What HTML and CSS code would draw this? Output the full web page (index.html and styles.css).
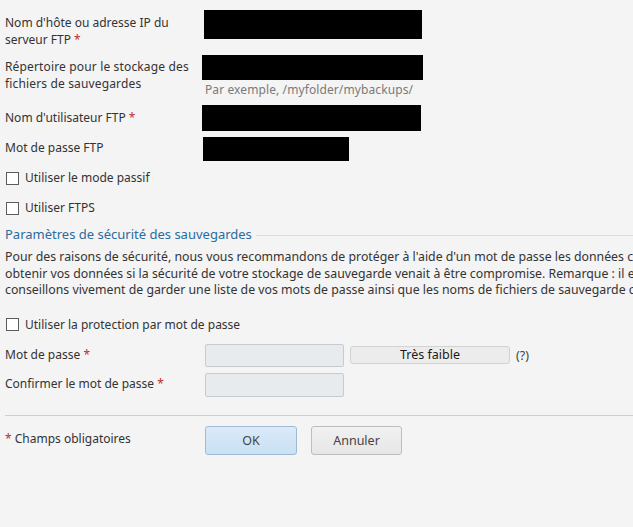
FILE: index.html
```html
<!DOCTYPE html>
<html lang="fr">
<head>
<meta charset="utf-8">
<title>FTP</title>
<link rel="stylesheet" href="styles.css">
</head>
<body>
<div class="page">
  <div class="row row-host">
    <div class="lbl">Nom d'hôte ou adresse IP du serveur FTP <span class="req">*</span></div>
    <div class="field"><div class="redact host"></div></div>
  </div>
  <div class="row row-dir">
    <div class="lbl">Répertoire pour le stockage des fichiers de sauvegardes</div>
    <div class="field">
      <div class="redact dir"></div>
      <div class="hint">Par exemple, /myfolder/mybackups/</div>
    </div>
  </div>
  <div class="row row-user">
    <div class="lbl">Nom d'utilisateur FTP <span class="req">*</span></div>
    <div class="field"><div class="redact user"></div></div>
  </div>
  <div class="row row-pass">
    <div class="lbl">Mot de passe FTP</div>
    <div class="field"><div class="redact pass"></div></div>
  </div>
  <label class="check cb-passive"><span class="box"></span>Utiliser le mode passif</label>
  <label class="check cb-ftps"><span class="box"></span>Utiliser FTPS</label>
  <div class="section-title"><span>Paramètres de sécurité des sauvegardes</span><span class="rule"></span></div>
  <p class="desc">Pour des raisons de sécurité, nous vous recommandons de protéger à l'aide d'un mot de passe les données contenues dans vos sauvegardes afin que des tiers ne puissent pas<br>obtenir vos données si la sécurité de votre stockage de sauvegarde venait à être compromise. Remarque : il est impossible de restaurer une sauvegarde sans son mot de passe. Nous vous<br>conseillons vivement de garder une liste de vos mots de passe ainsi que les noms de fichiers de sauvegarde correspondants.</p>
  <label class="check cb-protect"><span class="box"></span>Utiliser la protection par mot de passe</label>
  <div class="row row-pw">
    <div class="lbl">Mot de passe <span class="req">*</span></div>
    <div class="field inline">
      <div class="input pw1"></div>
      <div class="strength">Très faible</div>
      <span class="help">(?)</span>
    </div>
  </div>
  <div class="row row-pw2">
    <div class="lbl">Confirmer le mot de passe <span class="req">*</span></div>
    <div class="field"><div class="input pw2"></div></div>
  </div>
  <div class="separator"></div>
  <div class="footer">
    <div class="lbl"><span class="req">*</span> Champs obligatoires</div>
    <div class="buttons">
      <button class="btn btn-ok">OK</button>
      <button class="btn btn-cancel">Annuler</button>
    </div>
  </div>
</div>
</body>
</html>
```

FILE: styles.css
```css
html, body {
  margin: 0;
  padding: 0;
  overflow: hidden;
  background: #f4f4f4;
}
body {
  font-family: "Noto Sans", "DejaVu Sans", sans-serif;
  font-size: 12px;
  color: #333;
}
.page {
  width: 900px;
  padding-left: 5px;
  display: flex;
  flex-direction: column;
}
.row {
  display: flex;
  align-items: flex-start;
  flex: none;
}
.lbl {
  width: 197px;
  line-height: 17px;
  flex: none;
}
.req { color: #b83030; }
.field { display: flex; flex-direction: column; }
.field.inline { flex-direction: row; align-items: center; }
.redact { background: #000; }

.row-host { margin-top: 10px; height: 45px; }
.row-host .lbl { padding-top: 4px; }
.redact.host { width: 218px; height: 29px; margin-left: 2px; }

.row-dir { height: 50px; }
.row-dir .lbl { padding-top: 3px; letter-spacing: 0.15px; }
.redact.dir { width: 221px; height: 25px; }
.hint { color: #7a7a7a; line-height: 17px; margin-left: 3px; margin-top: 1px; letter-spacing: 0.1px; }

.row-user { height: 32px; }
.row-user .lbl { padding-top: 4px; }
.redact.user { width: 219px; height: 26px; }

.row-pass { height: 31px; }
.row-pass .lbl { padding-top: 2px; }
.redact.pass { width: 146px; height: 24px; margin-left: 1px; }

.check {
  display: flex;
  align-items: center;
  height: 20px;
  line-height: 20px;
  flex: none;
}
.box {
  width: 11px;
  height: 11px;
  border: 1px solid #5c5c5c;
  background: #fff;
  margin-left: 1px;
  margin-right: 6px;
  flex: none;
}
.cb-passive { margin-top: 0; }
.cb-ftps { margin-top: 10px; }

.section-title {
  display: flex;
  align-items: center;
  margin-top: 8px;
  height: 16px;
  color: #2b6c9c;
  font-size: 13px;
}
.section-title .rule {
  flex: 1;
  height: 1px;
  background: #dcdcdc;
  margin-left: 4px;
  margin-top: 2px;
}
.desc {
  margin: 7px 0 0;
  line-height: 16.5px;
  font-size: 12.3px;
  white-space: nowrap;
}
.cb-protect { margin-top: 16px; }

.row-pw { margin-top: 9px; align-items: center; }
.row-pw2 { margin-top: 6px; align-items: center; }
.row-pw .lbl, .row-pw2 .lbl { margin-top: -2px; }
.input {
  background: #e8ebee;
  border: 1px solid #c8ccd0;
  border-radius: 2px;
  box-sizing: border-box;
  margin-left: 3px;
}
.input.pw1 { width: 139px; height: 23px; }
.input.pw2 { width: 139px; height: 24px; }
.strength {
  width: 160px;
  height: 18px;
  box-sizing: border-box;
  margin-left: 6px;
  background: #ececec;
  border: 1px solid #d2d2d2;
  border-radius: 3px;
  text-align: center;
  line-height: 15px;
  font-size: 12.5px;
  color: #1a1a1a;
}
.help { margin-left: 6px; color: #444; font-size: 12.5px; }

.separator {
  height: 1px;
  background: #cfcfcf;
  margin-top: 18px;
  flex: none;
}
.footer {
  display: flex;
  align-items: center;
  margin-top: 10px;
}
.footer .lbl { margin-top: -3px; }
.buttons { display: flex; gap: 14px; margin-left: 3px; }
.btn {
  font-family: inherit;
  font-size: 12.5px;
  height: 29px;
  border-radius: 3px;
  padding: 0;
  color: #444;
}
.btn-ok {
  width: 92px;
  background: linear-gradient(#dbeaf8, #c9e0f4);
  border: 1px solid #9fbbd4;
}
.btn-cancel {
  width: 91px;
  background: linear-gradient(#f1f1f1, #e6e6e6);
  border: 1px solid #bdbdbd;
}
```
